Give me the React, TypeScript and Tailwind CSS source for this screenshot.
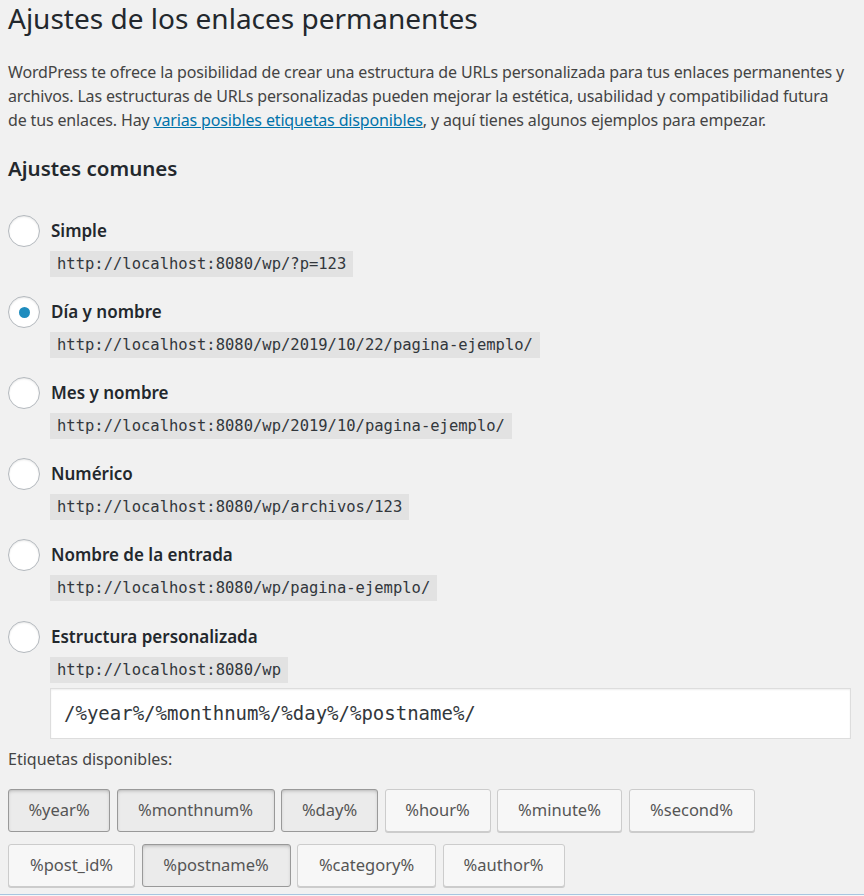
import React from "react";

const sans = { fontFamily: '"Segoe UI", "Noto Sans", "Open Sans", sans-serif' };

type Opt = { label: string; url: string; checked?: boolean };

const options: Opt[] = [
  { label: "Simple", url: "http://localhost:8080/wp/?p=123" },
  { label: "Día y nombre", url: "http://localhost:8080/wp/2019/10/22/pagina-ejemplo/", checked: true },
  { label: "Mes y nombre", url: "http://localhost:8080/wp/2019/10/pagina-ejemplo/" },
  { label: "Numérico", url: "http://localhost:8080/wp/archivos/123" },
  { label: "Nombre de la entrada", url: "http://localhost:8080/wp/pagina-ejemplo/" },
];

const row1 = [
  { t: "%year%", w: "w-[102px]", p: true },
  { t: "%monthnum%", w: "w-[158px]", p: true },
  { t: "%day%", w: "w-[97px]", p: true },
  { t: "%hour%", w: "w-[106px]", p: false },
  { t: "%minute%", w: "w-[125px]", p: false },
  { t: "%second%", w: "w-[126px]", p: false },
];
const row2 = [
  { t: "%post_id%", w: "w-[127px]", p: false },
  { t: "%postname%", w: "w-[149px]", p: true },
  { t: "%category%", w: "w-[139px]", p: false },
  { t: "%author%", w: "w-[122px]", p: false },
];

function Radio({ checked }: { checked?: boolean }) {
  return (
    <span className="flex h-[32px] w-[32px] shrink-0 items-center justify-center rounded-full border border-[#b4b9be] bg-white shadow-[inset_0_1px_2px_rgba(0,0,0,0.1)]">
      {checked && <span className="h-[11px] w-[11px] rounded-full bg-[#1e8cbe]" />}
    </span>
  );
}

function Code({ children }: { children: React.ReactNode }) {
  return (
    <code
      className="inline-block self-start bg-[#e2e2e2] px-[7px] py-[3px] text-[15.5px] leading-[20px] text-[#32373c]"
      style={{ fontFamily: '"DejaVu Sans Mono", "Liberation Mono", monospace' }}
    >
      {children}
    </code>
  );
}

function Tag({ t, w, p }: { t: string; w: string; p: boolean }) {
  return (
    <button
      className={
        "h-[43px] shrink-0 rounded-[3px] border text-[16.5px] text-[#555] " +
        w +
        " " +
        (p
          ? "border-[#999] bg-[#ebebeb] shadow-[inset_0_2px_5px_-3px_rgba(0,0,0,0.5)]"
          : "border-[#ccc] bg-[#f7f7f7] shadow-[0_1px_0_#ccc]")
      }
      style={sans}
    >
      {t}
    </button>
  );
}

export default function App() {
  return (
    <div className="min-h-[896px] bg-[#f1f1f1] text-[#444]" style={sans}>
      <div className="px-[8px]">
        <h1 className="text-[28px] leading-[36px] font-normal text-[#23282d]">
          Ajustes de los enlaces permanentes
        </h1>
        <p className="mt-[24px] text-[16px] leading-[24px] tracking-[-0.15px] text-[#444]">
          <span className="block whitespace-nowrap">
            WordPress te ofrece la posibilidad de crear una estructura de URLs personalizada para tus enlaces permanentes y
          </span>
          <span className="block whitespace-nowrap">
            archivos. Las estructuras de URLs personalizadas pueden mejorar la estética, usabilidad y compatibilidad futura
          </span>
          <span className="block whitespace-nowrap">
            de tus enlaces. Hay{" "}
            <a className="text-[#0073aa] underline" href="#">
              varias posibles etiquetas disponibles
            </a>
            , y aquí tienes algunos ejemplos para empezar.
          </span>
        </p>
        <h2 className="mt-[22px] text-[20.5px] leading-[28px] font-semibold text-[#23282d]">Ajustes comunes</h2>

        <div className="mt-[33px] flex flex-col gap-[19px]">
          {options.map((o) => (
            <div key={o.label} className="flex flex-col gap-[4px]">
              <div className="flex items-center gap-[11px]">
                <Radio checked={o.checked} />
                <span className="text-[17px] font-semibold text-[#23282d]">{o.label}</span>
              </div>
              <div className="pl-[42px]">
                <Code>{o.url}</Code>
              </div>
            </div>
          ))}
          <div className="flex flex-col gap-[4px] pt-[1px]">
            <div className="flex items-center gap-[11px]">
              <Radio />
              <span className="text-[17px] font-semibold text-[#23282d]">Estructura personalizada</span>
            </div>
            <div className="flex flex-col gap-[5px] pl-[42px]">
              <div>
                <Code>http://localhost:8080/wp</Code>
              </div>
              <div
                className="flex h-[51px] w-[801px] items-center border border-[#ddd] bg-white pl-[13px] text-[19px] text-[#32373c] shadow-[inset_0_1px_2px_rgba(0,0,0,0.07)]"
                style={{ fontFamily: '"DejaVu Sans Mono", "Liberation Mono", monospace' }}
              >
                /%year%/%monthnum%/%day%/%postname%/
              </div>
            </div>
          </div>
        </div>

        <div className="mt-[8px] text-[16px] leading-[24px] text-[#444]">Etiquetas disponibles:</div>
        <div className="mt-[18px] flex gap-[6.5px]">
          {row1.map((b) => (
            <Tag key={b.t} {...b} />
          ))}
        </div>
        <div className="mt-[12px] flex gap-[6.5px]">
          {row2.map((b) => (
            <Tag key={b.t} {...b} />
          ))}
        </div>
      </div>
      <div className="mt-[7px] h-[4px] border-t border-[#a7c6e0] bg-[#f7f7f7]" />
    </div>
  );
}
